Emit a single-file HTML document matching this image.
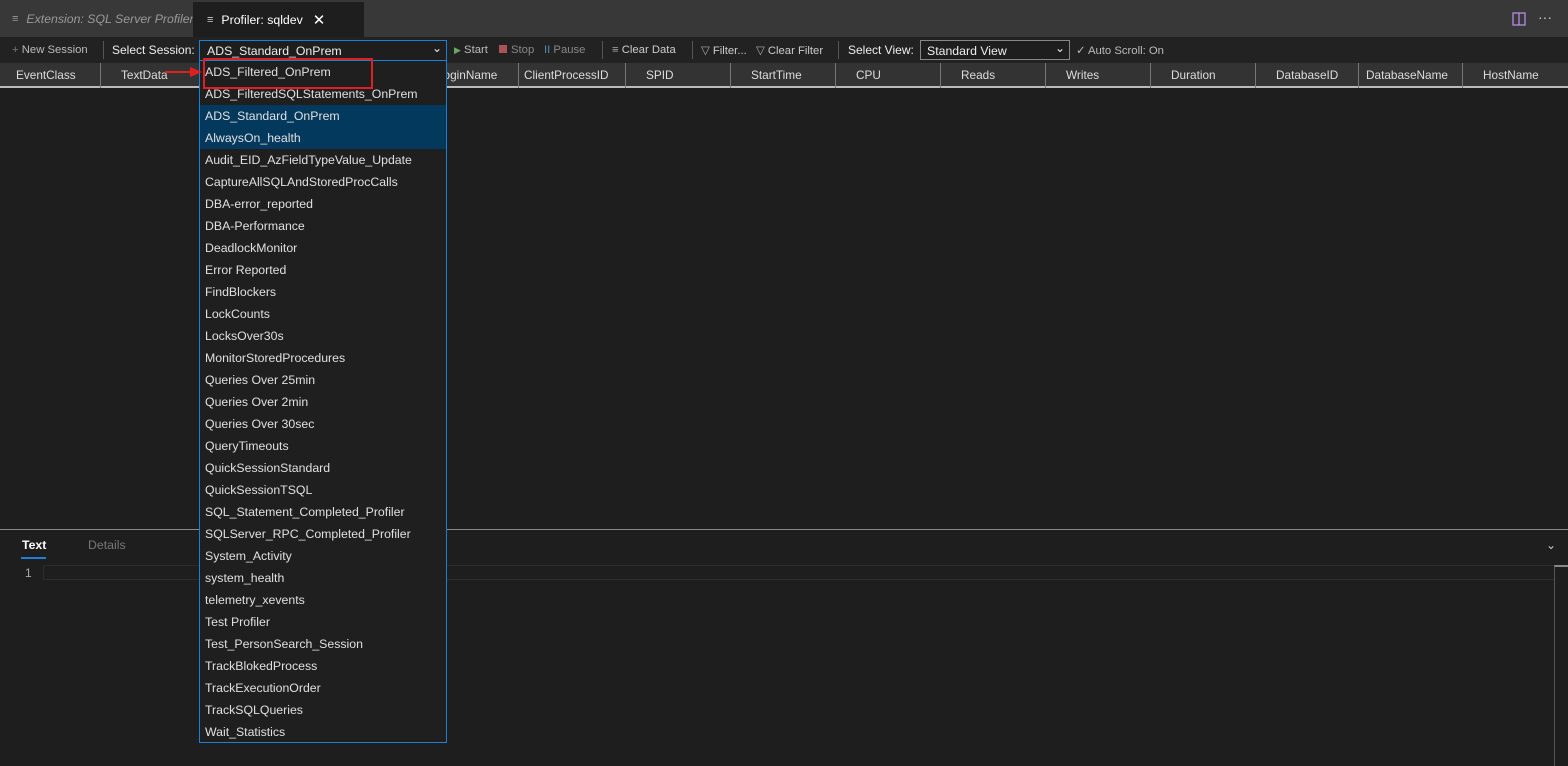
<!DOCTYPE html>
<html><head><meta charset="utf-8"><style>
*{box-sizing:border-box;margin:0;padding:0}
body{width:1568px;height:766px;background:#1e1e1e;font-family:"Liberation Sans",sans-serif;color:#ccc;position:relative;overflow:hidden;font-size:13px}
.abs{position:absolute}
.tabs{left:0;top:0;width:1568px;height:37px;background:#383838}
.tab{top:0;height:37px;display:flex;align-items:center;font-size:12.3px;white-space:nowrap}
.tb{left:0;top:37px;width:1568px;height:26px;background:#222;font-size:11.3px}
.tb span{position:absolute;top:7px;white-space:nowrap}
.hdr{left:0;top:63px;width:1568px;height:25px;background:#333;border-bottom:2px solid #bbb}
.col{position:absolute;top:0;height:25px;line-height:25px;border-right:1px solid #777;padding-left:18px;font-size:11.8px;color:#ddd;white-space:nowrap;overflow:hidden}
.dd{left:199px;top:61px;width:248px;height:682px;background:#1f1f1f;border:1px solid #1b81d8;border-top:none}
.it{height:22px;line-height:22px;padding-left:5px;font-size:12.3px;color:#e0e0e0;white-space:nowrap}
.sel{background:#04395e}
</style></head><body>
<div class="abs tabs"></div>
<div class="abs tab" style="left:0;width:193px;color:#9a9a9a;font-style:italic;padding-left:12px"><span style="font-style:normal;margin-right:8px;font-size:11px">&#8801;</span>Extension: SQL Server Profiler</div>
<div class="abs tab" style="left:193px;width:171px;background:#1e1e1e;color:#fff;padding-left:14px;top:2px;height:35px"><span style="margin-right:8px;font-size:11px;color:#ccc">&#8801;</span>Profiler: sqldev<span style="margin-left:10px;font-size:15px">✕</span></div>
<svg class="abs" style="left:1512px;top:12px" width="14" height="14"><rect x="1" y="1" width="12" height="12" fill="none" stroke="#b48ce8" stroke-width="1.3"/><line x1="7" y1="1" x2="7" y2="13" stroke="#b48ce8" stroke-width="1.3"/></svg>
<div class="abs" style="left:1538px;top:9px;color:#ccc;font-size:14px">···</div>
<div class="abs tb">
<span style="left:12px;color:#bbb"><b style="color:#777;font-weight:normal">+</b> New Session</span>
<div class="abs" style="left:103px;top:4px;width:1px;height:18px;background:#555"></div>
<span style="left:112px;color:#eee;font-size:12px;top:6px">Select Session:</span>
<div class="abs" style="left:199px;top:3px;width:248px;height:21px;background:#1e1e1e;border:1px solid #1b81d8;font-size:12.3px;color:#eee;padding:3px 0 0 7px">ADS_Standard_OnPrem<span style="position:absolute;right:4px;top:0px;font-size:12px">&#8964;</span></div>
<span style="left:454px;color:#bbb"><b style="color:#6a6;font-weight:normal;font-size:9px">&#9654;</b> Start</span>
<span style="left:499px;color:#888"><b style="display:inline-block;width:8px;height:8px;background:#a55;margin-right:4px"></b>Stop</span>
<span style="left:544px;color:#888"><b style="color:#58a;font-weight:normal">II</b> Pause</span>
<div class="abs" style="left:602px;top:4px;width:1px;height:18px;background:#555"></div>
<span style="left:612px;color:#ccc"><b style="color:#aaa;font-weight:normal">&#8801;</b> Clear Data</span>
<div class="abs" style="left:692px;top:4px;width:1px;height:18px;background:#555"></div>
<span style="left:701px;color:#ccc"><b style="color:#aaa;font-weight:normal">&#9661;</b> Filter...</span>
<span style="left:756px;color:#ccc"><b style="color:#aaa;font-weight:normal">&#9661;</b> Clear Filter</span>
<div class="abs" style="left:838px;top:4px;width:1px;height:18px;background:#555"></div>
<span style="left:848px;color:#eee;font-size:12px;top:6px">Select View:</span>
<div class="abs" style="left:920px;top:3px;width:150px;height:20px;background:#1e1e1e;border:1px solid #888;font-size:12.3px;color:#eee;padding:3px 0 0 6px">Standard View<span style="position:absolute;right:4px;top:0;font-size:12px">&#8964;</span></div>
<span style="left:1076px;color:#bbb">✓ Auto Scroll: On</span>
</div>
<div class="abs hdr">
<div class="col" style="left:0;width:101px;padding-left:16px">EventClass</div>
<div class="col" style="left:101px;width:210px;padding-left:20px">TextData</div>
<div class="col" style="left:311px;width:208px;padding-left:126px">LoginName</div>
<div class="col" style="left:519px;width:107px;padding-left:5px">ClientProcessID</div>
<div class="col" style="left:626px;width:105px;padding-left:20px">SPID</div>
<div class="col" style="left:731px;width:105px;padding-left:20px">StartTime</div>
<div class="col" style="left:836px;width:105px;padding-left:20px">CPU</div>
<div class="col" style="left:941px;width:105px;padding-left:20px">Reads</div>
<div class="col" style="left:1046px;width:105px;padding-left:20px">Writes</div>
<div class="col" style="left:1151px;width:105px;padding-left:20px">Duration</div>
<div class="col" style="left:1256px;width:103px;padding-left:20px">DatabaseID</div>
<div class="col" style="left:1359px;width:104px;padding-left:7px">DatabaseName</div>
<div class="col" style="left:1463px;width:105px;padding-left:20px;border:none">HostName</div>
</div>
<div class="abs" style="left:0;top:529px;width:1568px;height:1px;background:#8a8a8a"></div>
<div class="abs" style="left:22px;top:538px;color:#fff;font-size:12.3px;font-weight:bold">Text</div>
<div class="abs" style="left:21px;top:557px;width:25px;height:2px;background:#1b81d8"></div>
<div class="abs" style="left:88px;top:538px;color:#777;font-size:12.3px">Details</div>
<div class="abs" style="left:1546px;top:538px;color:#ccc;font-size:12px">&#8964;</div>
<div class="abs" style="left:25px;top:566px;color:#aaa;font-size:12px">1</div>
<div class="abs" style="left:43px;top:565px;width:1512px;height:15px;border:1px solid #2c2c2c"></div>
<div class="abs" style="left:1554px;top:565px;width:14px;height:201px;border-left:1px solid #555;border-top:2px solid #888"></div>
<div class="abs dd">
<div class="it">ADS_Filtered_OnPrem</div>
<div class="it">ADS_FilteredSQLStatements_OnPrem</div>
<div class="it sel">ADS_Standard_OnPrem</div>
<div class="it sel">AlwaysOn_health</div>
<div class="it">Audit_EID_AzFieldTypeValue_Update</div>
<div class="it">CaptureAllSQLAndStoredProcCalls</div>
<div class="it">DBA-error_reported</div>
<div class="it">DBA-Performance</div>
<div class="it">DeadlockMonitor</div>
<div class="it">Error Reported</div>
<div class="it">FindBlockers</div>
<div class="it">LockCounts</div>
<div class="it">LocksOver30s</div>
<div class="it">MonitorStoredProcedures</div>
<div class="it">Queries Over 25min</div>
<div class="it">Queries Over 2min</div>
<div class="it">Queries Over 30sec</div>
<div class="it">QueryTimeouts</div>
<div class="it">QuickSessionStandard</div>
<div class="it">QuickSessionTSQL</div>
<div class="it">SQL_Statement_Completed_Profiler</div>
<div class="it">SQLServer_RPC_Completed_Profiler</div>
<div class="it">System_Activity</div>
<div class="it">system_health</div>
<div class="it">telemetry_xevents</div>
<div class="it">Test Profiler</div>
<div class="it">Test_PersonSearch_Session</div>
<div class="it">TrackBlokedProcess</div>
<div class="it">TrackExecutionOrder</div>
<div class="it">TrackSQLQueries</div>
<div class="it">Wait_Statistics</div>
</div>
<div class="abs" style="left:203px;top:58px;width:170px;height:31px;border:2px solid #e02020"></div>
<div class="abs" style="left:165px;top:71px;width:28px;height:2px;background:#e02020"></div>
<svg class="abs" style="left:190px;top:67px" width="12" height="10"><polygon points="0,0 12,5 0,10" fill="#e02020"/></svg>
</body></html>
